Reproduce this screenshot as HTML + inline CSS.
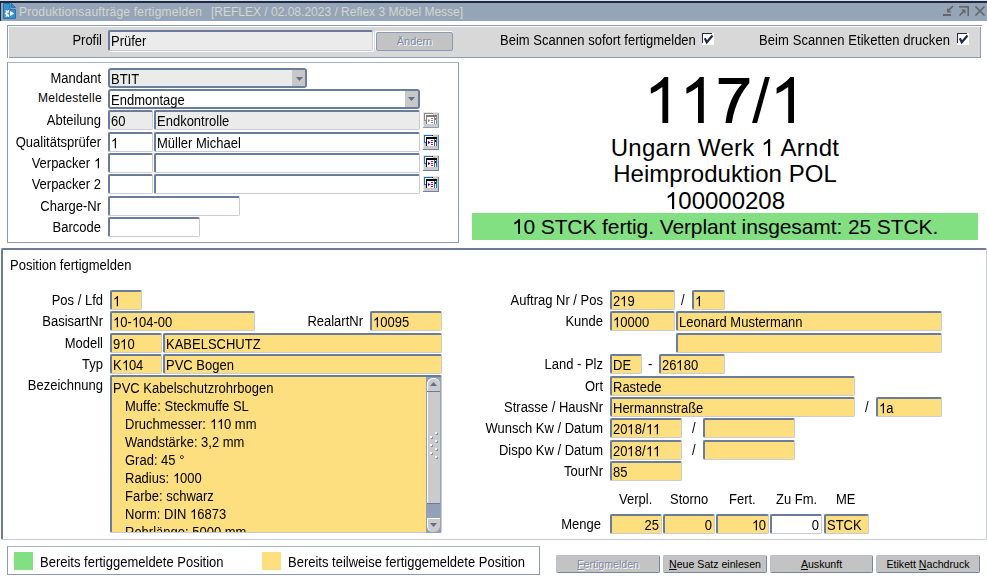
<!DOCTYPE html>
<html><head><meta charset="utf-8">
<style>
*{box-sizing:border-box;margin:0;padding:0}
html,body{width:987px;height:581px;overflow:hidden;background:#fff;font-family:"Liberation Sans",sans-serif;font-size:13px;color:#000;position:relative}
.a{position:absolute}
.l{position:absolute;white-space:pre;line-height:15px;text-align:right}
.t{position:absolute;white-space:pre;line-height:15px}
.i{position:absolute;background:#fff;border-top:2px solid #6a7c9a;border-left:2px solid #6a7c9a;border-right:1px solid #c9ccd2;border-bottom:1px solid #c9ccd2;border-radius:2px;white-space:pre;padding-left:1px;line-height:19px;height:20px}
.r{text-align:right;padding-right:2px;padding-left:0}
.y{background:#fedf80}
.g{background:#ebebeb}
.btn{position:absolute;background:#c3c3c3;border-top:1px solid #b4bfcf;border-left:1px solid #b4bfcf;border-right:1px solid #7586a3;border-bottom:1px solid #7586a3;border-radius:2px;font-size:10.6px;line-height:16px;text-align:center;white-space:pre}
.ib{position:absolute;width:16px;height:15px}
.sy{transform:scaleY(1.1);transform-origin:0 12px}
.s{display:inline-block;transform:scaleY(1.1);transform-origin:0 14px}
.tl{height:18px;transform:scaleY(1.1);transform-origin:0 13.5px}
.o1s{display:inline-block;width:0.556em;height:0.72em;vertical-align:baseline;overflow:visible}
.o1{display:inline-block;width:0.556em;height:0.717em;vertical-align:baseline;overflow:visible}

</style></head><body>

<svg width="0" height="0" style="position:absolute"><symbol id="one" viewBox="0 0 35.6 45.9"><path d="M20.6 0H24.5V45.9H18.7V10C15.3 12.5 11.3 15 7.1 16.7V10.9C12.3 8 17.8 4 20.6 0Z"/></symbol></svg>
<!-- title bar -->
<div class="a" style="left:0;top:0;width:987px;height:1px;background:#d9dde3"></div>
<div class="a" style="left:0;top:1px;width:987px;height:2px;background:#1d2b45"></div>
<div class="a" style="left:0;top:3px;width:987px;height:18px;background:#96a4b7"></div>
<div class="a" style="left:0;top:3px;width:1px;height:18px;background:#1d2b45"></div>
<svg class="a" style="left:3px;top:3px" width="13" height="16" viewBox="0 0 13 16">
<path d="M0.5 0.5H7V6.5H12.5V15.5H0.5Z" fill="#3b90d2" stroke="#2274b5"/><path d="M8.5 0.5L12.5 4.5H8.5Z" fill="#3b90d2" stroke="#2274b5"/>
<g fill="#fff"><circle cx="5.3" cy="10.5" r="2.6"/>
<rect x="4.6" y="7" width="1.4" height="7"/><rect x="1.8" y="9.8" width="3" height="1.4"/>
<path d="M2.3 7.8L3.3 7L5 9L4 9.8Z"/><path d="M2.3 13.2L3.3 14L5 12L4 11.2Z"/></g>
<circle cx="5.3" cy="10.5" r="0.9" fill="#3b90d2"/>
<rect x="6" y="6.8" width="1.2" height="8" fill="#3b90d2"/>
<path d="M7.2 8L11.2 10.5L7.2 13Z" fill="#fff"/>
</svg>
<div class="t" style="-webkit-text-stroke:0;left:19px;top:5px;font-size:12px;color:#d4d7d0;line-height:15px;letter-spacing:0.2px">Produktionsaufträge fertigmelden</div>
<div class="t" style="-webkit-text-stroke:0;left:211px;top:5px;font-size:12px;color:#d4d7d0;line-height:15px">[REFLEX / 02.08.2023 / Reflex 3 Möbel Messe]</div>
<svg class="a" style="left:943px;top:5px" width="44" height="13" viewBox="0 0 44 13">
<g fill="#666"><rect x="0" y="9" width="8" height="2"/><path d="M4 3V7.5H8.5Z"/><rect x="16" y="1" width="10" height="1.6"/><rect x="24.4" y="1" width="1.6" height="10"/><path d="M18 4.5H22.5V9Z"/></g>
<g stroke="#666" stroke-width="1.7" fill="none"><path d="M10 1L5 6"/><path d="M16.5 10.5L21 6"/><path d="M32.5 1.5L41.5 10.5M41.5 1.5L32.5 10.5"/></g>
</svg>

<!-- profil panel -->
<div class="a" style="left:7px;top:25px;width:975px;height:33px;border-top:1px solid #8b9bb5;border-left:1px solid #8b9bb5"></div>
<div class="a" style="left:9px;top:27px;width:972px;height:31px;background:#d8d8d8;border-right:1px solid #8b9bb5;border-bottom:1px solid #8b9bb5"></div>
<div class="l sy" style="left:40px;top:33px;width:62px">Profil</div>
<div class="i g" style="left:108px;top:30px;width:265px;height:21px;line-height:19px;padding-left:1px;box-shadow:1px 1px 0 #fff"><span class="s">Prüfer</span></div>
<div class="a" style="left:375px;top:31px;width:78px;height:20px;border-top:1px solid #fff;border-left:1px solid #fff;border-radius:2px"></div>
<div class="btn" style="left:376px;top:32px;width:77px;height:19px;border:1px solid #8b9bb5;border-radius:2px;-webkit-text-stroke:0;color:#7a8aa6;text-shadow:1px 1px 0 #fff;font-size:11px;line-height:16px">Ändern</div>
<div class="t sy" style="left:500px;top:33px">Beim Scannen sofort fertigmelden</div>
<div class="a" style="left:702px;top:33px;width:12px;height:12px;background:#fff"></div><div class="a" style="left:702px;top:33px;width:10px;height:1px;background:#1e2b44"></div><div class="a" style="left:702px;top:33px;width:1px;height:10px;background:#1e2b44"></div>
<svg class="a" style="left:702px;top:33px" width="12" height="12" viewBox="0 0 12 12"><path d="M2.8 5.2L4.8 9.2L10.5 2.5" stroke="#1e2b44" stroke-width="2.2" fill="none"/></svg>
<div class="t sy" style="left:759px;top:33px;letter-spacing:0.08px">Beim Scannen Etiketten drucken</div>
<div class="a" style="left:957px;top:33px;width:12px;height:12px;background:#fff"></div><div class="a" style="left:957px;top:33px;width:10px;height:1px;background:#1e2b44"></div><div class="a" style="left:957px;top:33px;width:1px;height:10px;background:#1e2b44"></div>
<svg class="a" style="left:957px;top:33px" width="12" height="12" viewBox="0 0 12 12"><path d="M2.8 5.2L4.8 9.2L10.5 2.5" stroke="#1e2b44" stroke-width="2.2" fill="none"/></svg>

<!-- left panel -->
<div class="a" style="left:7px;top:62px;width:452px;height:181px;border:1px solid #8b9bb5;border-top-color:#a7b3c6"></div>
<div class="l sy" style="left:0;top:71px;width:101px">Mandant</div>
<div class="i g" style="left:108px;top:68px;width:199px;height:20px;border:2px solid #6a7c9a;border-radius:3px;line-height:19px"><span class="s">BTIT</span></div>
<div class="a" style="left:292px;top:70px;width:13px;height:16px;background:#c8c8c8"></div>
<svg class="a" style="left:296px;top:77px" width="7" height="4"><path d="M0 0H7L3.5 4Z" fill="#5f6f8c"/></svg>
<div class="l" style="left:1px;top:91px;width:101px;font-size:12px;letter-spacing:0.3px">Meldestelle</div>
<div class="i" style="left:108px;top:89px;width:312px;height:20px;border:2px solid #6a7c9a;border-radius:3px;line-height:19px"><span class="s">Endmontage</span></div>
<div class="a" style="left:405px;top:91px;width:13px;height:16px;background:#c8c8c8"></div>
<svg class="a" style="left:408px;top:97px" width="7" height="4"><path d="M0 0H7L3.5 4Z" fill="#5f6f8c"/></svg>

<div class="l sy" style="left:0;top:113px;width:101px">Abteilung</div>
<div class="i g" style="left:108px;top:110px;width:45px"><span class="s">60</span></div>
<div class="i g" style="left:154px;top:110px;width:266px"><span class="s">Endkontrolle</span></div>
<div class="l sy" style="left:0;top:135px;width:101px">Qualitätsprüfer</div>
<div class="i" style="left:108px;top:132px;width:45px"><span class="s"><svg class="o1s" viewBox="0 0 35.6 45.9" preserveAspectRatio="none"><use href="#one"/></svg></span></div>
<div class="i" style="left:154px;top:132px;width:266px"><span class="s">Müller Michael</span></div>
<div class="l sy" style="left:0;top:156px;width:101px">Verpacker <svg class="o1s" viewBox="0 0 35.6 45.9" preserveAspectRatio="none"><use href="#one"/></svg></div>
<div class="i" style="left:108px;top:153px;width:45px"></div>
<div class="i" style="left:154px;top:153px;width:266px"></div>
<div class="l sy" style="left:0;top:177px;width:101px">Verpacker 2</div>
<div class="i" style="left:108px;top:174px;width:45px"></div>
<div class="i" style="left:154px;top:174px;width:266px"></div>
<div class="l sy" style="left:0;top:199px;width:101px">Charge-Nr</div>
<div class="i" style="left:108px;top:196px;width:132px"></div>
<div class="l sy" style="left:0;top:220px;width:101px">Barcode</div>
<div class="i" style="left:108px;top:217px;width:92px"></div>
<svg class="a" style="left:423px;top:112px" width="16" height="16" viewBox="0 0 16 16">
<rect x="0" y="0" width="16" height="16" fill="#cbcbcb"/><rect x="0" y="0" width="16" height="1" fill="#e6e6e6"/><rect x="0" y="0" width="1" height="16" fill="#e6e6e6"/>
<rect x="15" y="1" width="1" height="15" fill="#8b9fbd"/><rect x="0" y="15" width="16" height="1" fill="#8b9fbd"/>
<rect x="1" y="1" width="9" height="1" fill="#8a8a8a"/><rect x="1" y="1" width="1" height="8" fill="#8a8a8a"/><rect x="1" y="8" width="2" height="1" fill="#8a8a8a"/><rect x="2" y="2" width="8" height="1" fill="#fff"/><rect x="2" y="2" width="1" height="6" fill="#fff"/>
<rect x="9" y="1" width="1" height="1" fill="#7a7a7a"/>
<rect x="3" y="3" width="11" height="2" fill="#7a7a7a"/><rect x="3" y="5" width="1" height="7" fill="#7a7a7a"/>
<rect x="4" y="5" width="7" height="7" fill="#fff"/>
<rect x="11" y="5" width="1" height="7" fill="#8a8a8a"/><rect x="12" y="5" width="1" height="7" fill="#fff"/><rect x="13" y="5" width="1" height="7" fill="#8a8a8a"/><rect x="12" y="6" width="1" height="2" fill="#7a7a7a"/>
<path d="M5 7L7.5 8.5L5 10Z" fill="#8a8a8a"/>
<rect x="8" y="6" width="2" height="1" fill="#8c8c8c"/><rect x="8" y="8" width="2" height="1" fill="#8c8c8c"/><rect x="8" y="10" width="2" height="1" fill="#8c8c8c"/>
</svg><svg class="a" style="left:423px;top:134px" width="16" height="16" viewBox="0 0 16 16">
<rect x="0" y="0" width="16" height="16" fill="#cbcbcb"/><rect x="0" y="0" width="16" height="1" fill="#e6e6e6"/><rect x="0" y="0" width="1" height="16" fill="#e6e6e6"/>
<rect x="15" y="1" width="1" height="15" fill="#6f82a3"/><rect x="0" y="15" width="16" height="1" fill="#6f82a3"/>
<rect x="1" y="1" width="9" height="1" fill="#1a6fb3"/><rect x="1" y="1" width="1" height="8" fill="#1a6fb3"/><rect x="1" y="8" width="2" height="1" fill="#1a6fb3"/><rect x="2" y="2" width="8" height="1" fill="#fff"/><rect x="2" y="2" width="1" height="6" fill="#fff"/>
<rect x="9" y="1" width="1" height="1" fill="#000"/>
<rect x="3" y="3" width="11" height="2" fill="#000"/><rect x="3" y="5" width="1" height="7" fill="#000"/>
<rect x="4" y="5" width="7" height="7" fill="#fff"/>
<rect x="11" y="5" width="1" height="7" fill="#1a6fb3"/><rect x="12" y="5" width="1" height="7" fill="#fff"/><rect x="13" y="5" width="1" height="7" fill="#1a6fb3"/><rect x="12" y="6" width="1" height="2" fill="#000"/>
<path d="M5 7L7.5 8.5L5 10Z" fill="#00f"/>
<rect x="8" y="6" width="2" height="1" fill="#f00"/><rect x="8" y="8" width="2" height="1" fill="#f00"/><rect x="8" y="10" width="2" height="1" fill="#f00"/>
</svg><svg class="a" style="left:423px;top:155px" width="16" height="16" viewBox="0 0 16 16">
<rect x="0" y="0" width="16" height="16" fill="#cbcbcb"/><rect x="0" y="0" width="16" height="1" fill="#e6e6e6"/><rect x="0" y="0" width="1" height="16" fill="#e6e6e6"/>
<rect x="15" y="1" width="1" height="15" fill="#6f82a3"/><rect x="0" y="15" width="16" height="1" fill="#6f82a3"/>
<rect x="1" y="1" width="9" height="1" fill="#1a6fb3"/><rect x="1" y="1" width="1" height="8" fill="#1a6fb3"/><rect x="1" y="8" width="2" height="1" fill="#1a6fb3"/><rect x="2" y="2" width="8" height="1" fill="#fff"/><rect x="2" y="2" width="1" height="6" fill="#fff"/>
<rect x="9" y="1" width="1" height="1" fill="#000"/>
<rect x="3" y="3" width="11" height="2" fill="#000"/><rect x="3" y="5" width="1" height="7" fill="#000"/>
<rect x="4" y="5" width="7" height="7" fill="#fff"/>
<rect x="11" y="5" width="1" height="7" fill="#1a6fb3"/><rect x="12" y="5" width="1" height="7" fill="#fff"/><rect x="13" y="5" width="1" height="7" fill="#1a6fb3"/><rect x="12" y="6" width="1" height="2" fill="#000"/>
<path d="M5 7L7.5 8.5L5 10Z" fill="#00f"/>
<rect x="8" y="6" width="2" height="1" fill="#f00"/><rect x="8" y="8" width="2" height="1" fill="#f00"/><rect x="8" y="10" width="2" height="1" fill="#f00"/>
</svg><svg class="a" style="left:423px;top:176px" width="16" height="16" viewBox="0 0 16 16">
<rect x="0" y="0" width="16" height="16" fill="#cbcbcb"/><rect x="0" y="0" width="16" height="1" fill="#e6e6e6"/><rect x="0" y="0" width="1" height="16" fill="#e6e6e6"/>
<rect x="15" y="1" width="1" height="15" fill="#6f82a3"/><rect x="0" y="15" width="16" height="1" fill="#6f82a3"/>
<rect x="1" y="1" width="9" height="1" fill="#1a6fb3"/><rect x="1" y="1" width="1" height="8" fill="#1a6fb3"/><rect x="1" y="8" width="2" height="1" fill="#1a6fb3"/><rect x="2" y="2" width="8" height="1" fill="#fff"/><rect x="2" y="2" width="1" height="6" fill="#fff"/>
<rect x="9" y="1" width="1" height="1" fill="#000"/>
<rect x="3" y="3" width="11" height="2" fill="#000"/><rect x="3" y="5" width="1" height="7" fill="#000"/>
<rect x="4" y="5" width="7" height="7" fill="#fff"/>
<rect x="11" y="5" width="1" height="7" fill="#1a6fb3"/><rect x="12" y="5" width="1" height="7" fill="#fff"/><rect x="13" y="5" width="1" height="7" fill="#1a6fb3"/><rect x="12" y="6" width="1" height="2" fill="#000"/>
<path d="M5 7L7.5 8.5L5 10Z" fill="#00f"/>
<rect x="8" y="6" width="2" height="1" fill="#f00"/><rect x="8" y="8" width="2" height="1" fill="#f00"/><rect x="8" y="10" width="2" height="1" fill="#f00"/>
</svg>
<!-- right info -->
<svg class="a" style="left:640px;top:70px" width="170" height="60" viewBox="640 70 170 60">
<g fill="#000"><path d="M664.3 77H668.2V122.9H662.4V87C659 89.5 655 92 650.8 93.7V87.9C656 85 661.5 81 664.3 77Z"/><path transform="translate(35.6 0)" d="M664.3 77H668.2V122.9H662.4V87C659 89.5 655 92 650.8 93.7V87.9C656 85 661.5 81 664.3 77Z"/><path transform="translate(125.8 0)" d="M664.3 77H668.2V122.9H662.4V87C659 89.5 655 92 650.8 93.7V87.9C656 85 661.5 81 664.3 77Z"/>
<path d="M718.7 77.9H749.3V83C743 90 735 103 731.8 122.9H725.5C727.5 105 734 92 742 83.9H718.7Z"/>
<path d="M765 77H769.9L757.1 122.9H752Z"/></g></svg>
<div class="t" style="left:472px;top:135px;width:506px;text-align:center;font-size:24px;line-height:26px;letter-spacing:0.25px">Ungarn Werk <svg class="o1" style="margin-right:0.25px" viewBox="0 0 35.6 45.9"><use href="#one"/></svg> Arndt</div>
<div class="t" style="left:472px;top:161px;width:506px;text-align:center;font-size:24px;line-height:26px;letter-spacing:0.05px">Heimproduktion POL</div>
<div class="t" style="left:472px;top:188px;width:506px;text-align:center;font-size:24px;line-height:26px;letter-spacing:0px"><svg class="o1" viewBox="0 0 35.6 45.9"><use href="#one"/></svg>00000208</div>
<div class="a" style="left:472px;top:213px;width:506px;height:27px;background:#82e082"></div>
<div class="t" style="left:472px;top:214px;width:506px;text-align:center;font-size:21px;line-height:26px;letter-spacing:-0.1px"><svg class="o1" style="margin-right:-0.1px" viewBox="0 0 35.6 45.9"><use href="#one"/></svg>0 STCK fertig. Verplant insgesamt: 25 STCK.</div>

<!-- position panel -->
<div class="a" style="left:1px;top:248px;width:986px;height:292px;border-top:2px solid #6a7c9a;border-left:2px solid #6a7c9a;border-right:1px solid #c9ccd2;border-bottom:1px solid #c9ccd2;border-radius:2px"></div>
<div class="t sy" style="left:10px;top:258px">Position fertigmelden</div>


<!-- position left -->
<div class="l sy" style="left:0;top:293px;width:103px">Pos / Lfd</div>
<div class="i y" style="left:110px;top:290px;width:32px"><span class="s"><svg class="o1s" viewBox="0 0 35.6 45.9" preserveAspectRatio="none"><use href="#one"/></svg></span></div>
<div class="l sy" style="left:0;top:314px;width:103px">BasisartNr</div>
<div class="i y" style="left:110px;top:311px;width:145px"><span class="s"><svg class="o1s" viewBox="0 0 35.6 45.9" preserveAspectRatio="none"><use href="#one"/></svg>0-<svg class="o1s" viewBox="0 0 35.6 45.9" preserveAspectRatio="none"><use href="#one"/></svg>04-00</span></div>
<div class="l sy" style="left:250px;top:314px;width:113px">RealartNr</div>
<div class="i y" style="left:370px;top:311px;width:72px"><span class="s"><svg class="o1s" viewBox="0 0 35.6 45.9" preserveAspectRatio="none"><use href="#one"/></svg>0095</span></div>
<div class="l sy" style="left:0;top:336px;width:103px">Modell</div>
<div class="i y" style="left:110px;top:333px;width:52px"><span class="s">9<svg class="o1s" viewBox="0 0 35.6 45.9" preserveAspectRatio="none"><use href="#one"/></svg>0</span></div>
<div class="i y" style="left:163px;top:333px;width:279px"><span class="s">KABELSCHUTZ</span></div>
<div class="l sy" style="left:0;top:357px;width:103px">Typ</div>
<div class="i y" style="left:110px;top:354px;width:52px"><span class="s">K<svg class="o1s" viewBox="0 0 35.6 45.9" preserveAspectRatio="none"><use href="#one"/></svg>04</span></div>
<div class="i y" style="left:163px;top:354px;width:279px"><span class="s">PVC Bogen</span></div>
<div class="l sy" style="left:0;top:378px;width:103px">Bezeichnung</div>
<div class="i y" style="left:110px;top:375px;width:332px;height:158px;overflow:hidden;line-height:18px;padding-top:3px"><div class="tl">PVC Kabelschutzrohrbogen</div><div class="tl" style="padding-left:12px">Muffe: Steckmuffe SL</div><div class="tl" style="padding-left:12px">Druchmesser: <svg class="o1s" viewBox="0 0 35.6 45.9" preserveAspectRatio="none"><use href="#one"/></svg><svg class="o1s" viewBox="0 0 35.6 45.9" preserveAspectRatio="none"><use href="#one"/></svg>0 mm</div><div class="tl" style="padding-left:12px">Wandstärke: 3,2 mm</div><div class="tl" style="padding-left:12px">Grad: 45 °</div><div class="tl" style="padding-left:12px">Radius: <svg class="o1s" viewBox="0 0 35.6 45.9" preserveAspectRatio="none"><use href="#one"/></svg>000</div><div class="tl" style="padding-left:12px">Farbe: schwarz</div><div class="tl" style="padding-left:12px">Norm: DIN <svg class="o1s" viewBox="0 0 35.6 45.9" preserveAspectRatio="none"><use href="#one"/></svg>6873</div><div class="tl" style="padding-left:12px">Rohrlänge: 5000 mm</div></div>
<!-- scrollbar -->
<div class="a" style="left:426px;top:377px;width:15px;height:156px;background:#92a1b8"></div>
<div class="a" style="left:427px;top:378px;width:13px;height:13px;background:#cbcbcb;border-top:1px solid #fff;border-left:1px solid #fff;border-radius:6px 6px 0 0"></div>
<svg class="a" style="left:430px;top:382px" width="7" height="4"><path d="M0 4H7L3.5 0Z" fill="#5f6f8c"/></svg>
<div class="a" style="left:427px;top:391px;width:13px;height:1px;background:#6a7c9a"></div>
<div class="a" style="left:427px;top:392px;width:13px;height:111px;background:#cbcbcb;border-left:1px solid #fff"></div>
<div class="a" style="left:427px;top:503px;width:13px;height:1px;background:#6a7c9a"></div>
<div class="a" style="left:427px;top:518px;width:13px;height:14px;background:#cbcbcb;border-top:1px solid #fff;border-left:1px solid #fff;border-radius:0 0 6px 6px"></div>
<svg class="a" style="left:430px;top:523px" width="7" height="4"><path d="M0 0H7L3.5 4Z" fill="#5f6f8c"/></svg>
<svg class="a" style="left:429px;top:431px" width="10" height="30"><rect x="6" y="1" width="2" height="2" fill="#fff"/><rect x="7" y="3" width="2" height="1" fill="#7f8fae"/><rect x="8" y="2" width="1" height="1" fill="#7f8fae"/><rect x="6" y="9" width="2" height="2" fill="#fff"/><rect x="7" y="11" width="2" height="1" fill="#7f8fae"/><rect x="8" y="10" width="1" height="1" fill="#7f8fae"/><rect x="6" y="17" width="2" height="2" fill="#fff"/><rect x="7" y="19" width="2" height="1" fill="#7f8fae"/><rect x="8" y="18" width="1" height="1" fill="#7f8fae"/><rect x="6" y="25" width="2" height="2" fill="#fff"/><rect x="7" y="27" width="2" height="1" fill="#7f8fae"/><rect x="8" y="26" width="1" height="1" fill="#7f8fae"/><rect x="1" y="5" width="2" height="2" fill="#fff"/><rect x="2" y="7" width="2" height="1" fill="#7f8fae"/><rect x="3" y="6" width="1" height="1" fill="#7f8fae"/><rect x="1" y="13" width="2" height="2" fill="#fff"/><rect x="2" y="15" width="2" height="1" fill="#7f8fae"/><rect x="3" y="14" width="1" height="1" fill="#7f8fae"/><rect x="1" y="21" width="2" height="2" fill="#fff"/><rect x="2" y="23" width="2" height="1" fill="#7f8fae"/><rect x="3" y="22" width="1" height="1" fill="#7f8fae"/></svg>

<!-- position right -->
<div class="l sy" style="left:460px;top:293px;width:143px">Auftrag Nr / Pos</div>
<div class="i y" style="left:610px;top:290px;width:65px"><span class="s">2<svg class="o1s" viewBox="0 0 35.6 45.9" preserveAspectRatio="none"><use href="#one"/></svg>9</span></div>
<div class="t sy" style="left:681px;top:293px">/</div>
<div class="i y" style="left:692px;top:290px;width:33px"><span class="s"><svg class="o1s" viewBox="0 0 35.6 45.9" preserveAspectRatio="none"><use href="#one"/></svg></span></div>
<div class="l sy" style="left:460px;top:314px;width:143px">Kunde</div>
<div class="i y" style="left:610px;top:311px;width:65px"><span class="s"><svg class="o1s" viewBox="0 0 35.6 45.9" preserveAspectRatio="none"><use href="#one"/></svg>0000</span></div>
<div class="i y" style="left:676px;top:311px;width:266px"><span class="s">Leonard Mustermann</span></div>
<div class="i y" style="left:676px;top:333px;width:266px"></div>
<div class="l sy" style="left:460px;top:357px;width:143px">Land - Plz</div>
<div class="i y" style="left:610px;top:354px;width:32px"><span class="s">DE</span></div>
<div class="t sy" style="left:648px;top:357px">-</div>
<div class="i y" style="left:659px;top:354px;width:66px"><span class="s">26<svg class="o1s" viewBox="0 0 35.6 45.9" preserveAspectRatio="none"><use href="#one"/></svg>80</span></div>
<div class="l sy" style="left:460px;top:379px;width:143px">Ort</div>
<div class="i y" style="left:610px;top:376px;width:245px"><span class="s">Rastede</span></div>
<div class="l sy" style="left:460px;top:400px;width:143px">Strasse / HausNr</div>
<div class="i y" style="left:610px;top:397px;width:245px"><span class="s">Hermannstraße</span></div>
<div class="t sy" style="left:865px;top:400px">/</div>
<div class="i y" style="left:876px;top:397px;width:66px"><span class="s"><svg class="o1s" viewBox="0 0 35.6 45.9" preserveAspectRatio="none"><use href="#one"/></svg>a</span></div>
<div class="l sy" style="left:460px;top:421px;width:143px">Wunsch Kw / Datum</div>
<div class="i y" style="left:610px;top:418px;width:72px"><span class="s">20<svg class="o1s" viewBox="0 0 35.6 45.9" preserveAspectRatio="none"><use href="#one"/></svg>8/<svg class="o1s" viewBox="0 0 35.6 45.9" preserveAspectRatio="none"><use href="#one"/></svg><svg class="o1s" viewBox="0 0 35.6 45.9" preserveAspectRatio="none"><use href="#one"/></svg></span></div>
<div class="t sy" style="left:692px;top:421px">/</div>
<div class="i y" style="left:703px;top:418px;width:92px"></div>
<div class="l sy" style="left:460px;top:443px;width:143px">Dispo Kw / Datum</div>
<div class="i y" style="left:610px;top:440px;width:72px"><span class="s">20<svg class="o1s" viewBox="0 0 35.6 45.9" preserveAspectRatio="none"><use href="#one"/></svg>8/<svg class="o1s" viewBox="0 0 35.6 45.9" preserveAspectRatio="none"><use href="#one"/></svg><svg class="o1s" viewBox="0 0 35.6 45.9" preserveAspectRatio="none"><use href="#one"/></svg></span></div>
<div class="t sy" style="left:692px;top:443px">/</div>
<div class="i y" style="left:703px;top:440px;width:92px"></div>
<div class="l sy" style="left:460px;top:464px;width:143px">TourNr</div>
<div class="i y" style="left:610px;top:461px;width:72px"><span class="s">85</span></div>
<div class="t sy" style="left:619px;top:492px">Verpl.</div>
<div class="t sy" style="left:670px;top:492px">Storno</div>
<div class="t sy" style="left:729px;top:492px">Fert.</div>
<div class="t sy" style="left:776px;top:492px">Zu Fm.</div>
<div class="t sy" style="left:836px;top:492px">ME</div>
<div class="l sy" style="left:460px;top:517px;width:141px">Menge</div>
<div class="i y r" style="left:610px;top:514px;width:52px"><span class="s">25</span></div>
<div class="i y r" style="left:663px;top:514px;width:52px"><span class="s">0</span></div>
<div class="i y r" style="left:716px;top:514px;width:53px"><span class="s"><svg class="o1s" viewBox="0 0 35.6 45.9" preserveAspectRatio="none"><use href="#one"/></svg>0</span></div>
<div class="i r" style="left:770px;top:514px;width:52px"><span class="s">0</span></div>
<div class="i y" style="left:824px;top:514px;width:45px"><span class="s">STCK</span></div>

<!-- legend -->
<div class="a" style="left:7px;top:546px;width:533px;height:29px;border:1px solid #8b9bb5;border-top-color:#a7b3c6"></div>
<div class="a" style="left:14px;top:552px;width:19px;height:18px;background:#82e082"></div>
<div class="t sy" style="left:40px;top:555px">Bereits fertiggemeldete Position</div>
<div class="a" style="left:262px;top:552px;width:19px;height:18px;background:#fedf80"></div>
<div class="t sy" style="left:288px;top:555px">Bereits teilweise fertiggemeldete Position</div>

<!-- buttons -->
<div class="btn" style="left:556px;top:555px;width:104px;height:18px;-webkit-text-stroke:0;color:#7a8aa6;text-shadow:1px 1px 0 #fff"><u>F</u>ertigmelden</div>
<div class="btn" style="left:663px;top:555px;width:104px;height:18px"><u>N</u>eue Satz einlesen</div>
<div class="btn" style="left:770px;top:555px;width:103px;height:18px"><u>A</u>uskunft</div>
<div class="btn" style="left:876px;top:555px;width:104px;height:18px">Etikett <u>N</u>achdruck</div>

</body></html>
